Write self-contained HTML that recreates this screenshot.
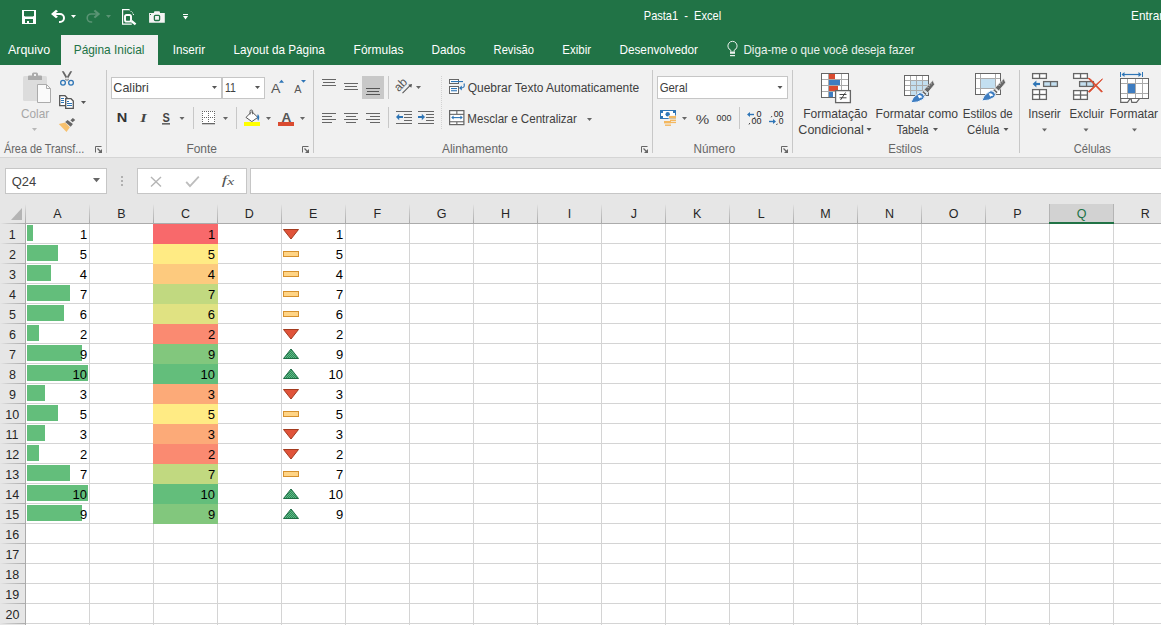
<!DOCTYPE html>
<html><head><meta charset="utf-8"><title>Pasta1 - Excel</title>
<style>
html,body{margin:0;padding:0;width:1161px;height:625px;overflow:hidden;background:#fff;font-family:"Liberation Sans",sans-serif}
svg{position:absolute;left:0;top:0;display:block}
text{white-space:pre}
</style></head><body>
<svg width="1161" height="625" viewBox="0 0 1161 625">
<defs>
<linearGradient id="vg" x1="0" y1="0" x2="0" y2="1"><stop offset="0" stop-color="#E6E6E6"/><stop offset="0.3" stop-color="#CDCDCD"/><stop offset="1" stop-color="#ABABAB"/></linearGradient>
<linearGradient id="hg" x1="0" y1="0" x2="1" y2="0"><stop offset="0" stop-color="#E6E6E6"/><stop offset="0.3" stop-color="#CDCDCD"/><stop offset="1" stop-color="#ABABAB"/></linearGradient>
<pattern id="gp" x="0" y="0" width="2" height="2" patternUnits="userSpaceOnUse"><rect width="2" height="2" fill="#2F8558"/><rect width="1" height="1" fill="#5DBE86"/><rect x="1" y="1" width="1" height="1" fill="#5DBE86"/></pattern>
<pattern id="dsep" x="0" y="0" width="1" height="2" patternUnits="userSpaceOnUse"><rect width="1" height="1" fill="#D2D2D2"/></pattern>
</defs>
<g id="title"><rect x="0" y="0" width="1161" height="65" fill="#217346"/><rect x="0" y="65" width="1161" height="92" fill="#F1F1F1"/><rect x="61" y="35" width="97" height="30" fill="#F1F1F1"/><rect x="0" y="157" width="1161" height="1" fill="#D5D5D5"/><rect x="0" y="158" width="1161" height="66" fill="#E6E6E6"/><rect x="22" y="10" width="14" height="14" fill="#FFFFFF"/><path d="M24 11h10v4.5l-1 1h-8l-1-1z" fill="#217346"/><rect x="25" y="19" width="8" height="4" fill="#217346"/><rect x="27" y="21" width="2" height="2" fill="#FFFFFF"/><path d="M54 14h6a4 4 0 0 1 0 8h-1" fill="none" stroke="#FFFFFF" stroke-width="2"/><path d="M51 14L56 9.8L58 11.2L54.6 14L58 16.8L56 18.2Z" fill="#FFFFFF"/><path d="M71 15h5l-2.5 3.00z" fill="#FFFFFF"/><path d="M97.2 14h-6a4 4 0 0 0 0 8h1" fill="none" stroke="#5A9474" stroke-width="1.6"/><path d="M100.2 14L95.2 9.8L93.6 11.0L96.8 14L93.6 17.0L95.2 18.2Z" fill="#5A9474"/><path d="M106 15h5l-2.5 3.00z" fill="#5A9474"/><path d="M129.2 9.6H122.6V24.2H131.8" fill="none" stroke="#FFFFFF" stroke-width="1.2"/><path d="M129.2 9.6L133.4 13.8V15.8" fill="none" stroke="#FFFFFF" stroke-width="1" stroke-dasharray="1.2 0.8"/><rect x="125" y="15" width="6" height="6.6" rx="1.6" fill="none" stroke="#FFFFFF" stroke-width="1.9"/><path d="M131.4 21L135.6 24.4" fill="none" stroke="#FFFFFF" stroke-width="2.3"/><path d="M149.1 12.9H153.8L154.4 11.2H159.5L160.1 12.9H164.8V22.8H149.1Z" fill="#F4F4F4"/><rect x="154.4" y="15.3" width="5.2" height="5.2" rx="1" fill="none" stroke="#217346" stroke-width="1.3"/><rect x="150" y="14" width="1" height="1" fill="#217346"/><rect x="183" y="14" width="5" height="1" fill="#FFFFFF"/><path d="M183 16h5l-2.5 3.5z" fill="#FFFFFF"/><text transform="matrix(0.9216 0 0 1.0 643.79 20)" font-family="Liberation Sans" font-size="12" fill="#FFFFFF">Pasta1  -  Excel</text><text transform="matrix(0.9843 0 0 1.0 1131.03 20)" font-family="Liberation Sans" font-size="12" fill="#FFFFFF">Entrar</text><text transform="matrix(1.0383 0 0 1.0 7.98 54)" font-family="Liberation Sans" font-size="12" fill="#FFFFFF">Arquivo</text><text transform="matrix(0.9915 0 0 1.0 73.72 54)" font-family="Liberation Sans" font-size="12" fill="#217346">Página Inicial</text><text transform="matrix(0.9709 0 0 1.0 172.72 54)" font-family="Liberation Sans" font-size="12" fill="#FFFFFF">Inserir</text><text transform="matrix(0.9770 0 0 1.0 233.54 54)" font-family="Liberation Sans" font-size="12" fill="#FFFFFF">Layout da Página</text><text transform="matrix(0.9981 0 0 1.0 353.62 54)" font-family="Liberation Sans" font-size="12" fill="#FFFFFF">Fórmulas</text><text transform="matrix(0.9799 0 0 1.0 431.44 54)" font-family="Liberation Sans" font-size="12" fill="#FFFFFF">Dados</text><text transform="matrix(0.9316 0 0 1.0 493.58 54)" font-family="Liberation Sans" font-size="12" fill="#FFFFFF">Revisão</text><text transform="matrix(0.9576 0 0 1.0 562.36 54)" font-family="Liberation Sans" font-size="12" fill="#FFFFFF">Exibir</text><text transform="matrix(0.9827 0 0 1.0 619.43 54)" font-family="Liberation Sans" font-size="12" fill="#FFFFFF">Desenvolvedor</text><text transform="matrix(0.9742 0 0 1.0 743.44 54)" font-family="Liberation Sans" font-size="12" fill="#EAF1ED">Diga-me o que você deseja fazer</text><path d="M730.8 51.5v-1.3a4.6 4.6 0 1 1 3.4 0v1.3" fill="none" stroke="#EAF1ED" stroke-width="1"/><rect x="730" y="51.5" width="5" height="2.3" fill="#EAF1ED"/><rect x="730" y="55" width="5" height="1.2" fill="#EAF1ED"/></g>
<g id="ribbon"><rect x="106" y="70" width="1" height="83" fill="#C8C8C8"/><rect x="313" y="70" width="1" height="83" fill="#C8C8C8"/><rect x="652" y="70" width="1" height="83" fill="#C8C8C8"/><rect x="792" y="70" width="1" height="83" fill="#C8C8C8"/><rect x="1019" y="70" width="1" height="83" fill="#C8C8C8"/><rect x="23" y="76" width="24" height="25" fill="#DCDCDC" rx="1.5"/><path d="M28 80v-3.5q0-1 1-1h3v-1.5q0-1.5 1.5-1.5h3q1.5 0 1.5 1.5v1.5h3q1 0 1 1v3.5z" fill="#ABABAB"/><rect x="34" y="74" width="2" height="2" fill="#F1F1F1"/><path d="M37.5 84.5h9l4 4v14h-13z" fill="#FAFAFA" stroke="#ABABAB" stroke-width="1"/><path d="M46.5 84.5v4h4" fill="none" stroke="#ABABAB" stroke-width="1"/><text transform="matrix(0.9832 0 0 1.0 21.00 118)" font-family="Liberation Sans" font-size="12" fill="#A6A6A6">Colar</text><path d="M32 128h5l-2.5 3.00z" fill="#B8B8B8"/><path d="M61.8 71.2L63.8 71.2L68.8 79.8L67.2 80.8ZM72.2 71.2L70.2 71.2L65.2 79.8L66.8 80.8Z" fill="#666"/><circle cx="63" cy="82.8" r="2.35" fill="none" stroke="#2E75B6" stroke-width="1.3"/><circle cx="71" cy="82.8" r="2.35" fill="none" stroke="#2E75B6" stroke-width="1.3"/><path d="M59.7 95.7h5.3l2 2v8h-7.3z" fill="#fff" stroke="#555" stroke-width="1.3"/><path d="M65.7 98.7h5.3l2.3 2.3v7.3h-7.6z" fill="#fff" stroke="#555" stroke-width="1.3"/><rect x="61" y="98" width="3" height="1" fill="#2E75B6"/><rect x="61" y="100" width="3" height="1" fill="#2E75B6"/><rect x="61" y="102" width="3" height="1" fill="#2E75B6"/><rect x="67" y="101" width="2" height="1" fill="#2E75B6"/><rect x="67" y="103" width="5" height="1" fill="#2E75B6"/><rect x="67" y="105" width="5" height="1" fill="#2E75B6"/><path d="M81 101h5l-2.5 3.00z" fill="#555"/><path d="M58.8 124.1L65.2 122.5L69.9 127.3L66.5 132.1Z" fill="#F7C16E"/><path d="M65.2 121.9L67.5 120L72.9 124.1L70.7 126.7Z" fill="#666"/><path d="M70.4 120.3L72.9 118L75.2 120L72.6 122.2Z" fill="#666"/><text transform="matrix(0.9065 0 0 1.0 3.98 153)" font-family="Liberation Sans" font-size="12" fill="#666666">Área de Transf...</text><path d="M95.5 152.5v-6h6" fill="none" stroke="#666" stroke-width="1"/><path d="M97.5 148.5l3.5 3.5" fill="none" stroke="#666" stroke-width="1.3"/><path d="M98 153h4v-4z" fill="#666"/><path d="M302.5 152.5v-6h6" fill="none" stroke="#666" stroke-width="1"/><path d="M304.5 148.5l3.5 3.5" fill="none" stroke="#666" stroke-width="1.3"/><path d="M305 153h4v-4z" fill="#666"/><path d="M641.5 152.5v-6h6" fill="none" stroke="#666" stroke-width="1"/><path d="M643.5 148.5l3.5 3.5" fill="none" stroke="#666" stroke-width="1.3"/><path d="M644 153h4v-4z" fill="#666"/><path d="M781.5 152.5v-6h6" fill="none" stroke="#666" stroke-width="1"/><path d="M783.5 148.5l3.5 3.5" fill="none" stroke="#666" stroke-width="1.3"/><path d="M784 153h4v-4z" fill="#666"/><rect x="111.5" y="77.5" width="110" height="21" fill="#fff" stroke="#C6C6C6"/><rect x="222.5" y="77.5" width="42" height="21" fill="#fff" stroke="#C6C6C6"/><text transform="matrix(1.0015 0 0 1.0 113.36 92)" font-family="Liberation Sans" font-size="12.5" fill="#404040">Calibri</text><text transform="matrix(0.8427 0 0 1.0 224.90 92)" font-family="Liberation Sans" font-size="12.5" fill="#404040">11</text><path d="M212 86h5l-2.5 3.00z" fill="#555"/><path d="M255 86h5l-2.5 3.00z" fill="#555"/><text transform="matrix(1.0579 0 0 1.0 270.97 92.6)" font-family="Liberation Sans" font-size="13.4" fill="#555">A</text><path d="M279 82.8l2.5-3 2.5 3z" fill="#2E75B6"/><text transform="matrix(1.0244 0 0 1.0 294.18 92.6)" font-family="Liberation Sans" font-size="10.6" fill="#555">A</text><path d="M301 80h5l-2.5 2.8z" fill="#2E75B6"/><text transform="matrix(1.1991 0 0 1.0 116.72 121.8)" font-family="Liberation Sans" font-size="12.2" fill="#333" font-weight="bold">N</text><text transform="matrix(1.2319 0 0 1.0 140.36 121.8)" font-family="Liberation Serif" font-size="13.3" fill="#444" font-style="italic" font-weight="bold">I</text><text transform="matrix(0.9030 0 0 1.0 162.38 121.8)" font-family="Liberation Sans" font-size="12.2" fill="#444" font-weight="bold">S</text><rect x="162" y="123.2" width="8" height="1.3" fill="#444"/><path d="M179.5 117h5l-2.5 3.00z" fill="#666"/><rect x="193" y="107" width="1" height="22" fill="#C8C8C8"/><rect x="202" y="111" width="13" height="13" fill="#fff"/><rect x="202" y="111" width="1" height="1" fill="#666"/><rect x="204" y="111" width="1" height="1" fill="#666"/><rect x="206" y="111" width="1" height="1" fill="#666"/><rect x="208" y="111" width="1" height="1" fill="#666"/><rect x="210" y="111" width="1" height="1" fill="#666"/><rect x="212" y="111" width="1" height="1" fill="#666"/><rect x="214" y="111" width="1" height="1" fill="#666"/><rect x="202" y="117" width="1" height="1" fill="#666"/><rect x="204" y="117" width="1" height="1" fill="#666"/><rect x="206" y="117" width="1" height="1" fill="#666"/><rect x="208" y="117" width="1" height="1" fill="#666"/><rect x="210" y="117" width="1" height="1" fill="#666"/><rect x="212" y="117" width="1" height="1" fill="#666"/><rect x="214" y="117" width="1" height="1" fill="#666"/><rect x="202" y="111" width="1" height="1" fill="#666"/><rect x="202" y="113" width="1" height="1" fill="#666"/><rect x="202" y="115" width="1" height="1" fill="#666"/><rect x="202" y="117" width="1" height="1" fill="#666"/><rect x="202" y="119" width="1" height="1" fill="#666"/><rect x="202" y="121" width="1" height="1" fill="#666"/><rect x="208" y="111" width="1" height="1" fill="#666"/><rect x="208" y="113" width="1" height="1" fill="#666"/><rect x="208" y="115" width="1" height="1" fill="#666"/><rect x="208" y="117" width="1" height="1" fill="#666"/><rect x="208" y="119" width="1" height="1" fill="#666"/><rect x="208" y="121" width="1" height="1" fill="#666"/><rect x="214" y="111" width="1" height="1" fill="#666"/><rect x="214" y="113" width="1" height="1" fill="#666"/><rect x="214" y="115" width="1" height="1" fill="#666"/><rect x="214" y="117" width="1" height="1" fill="#666"/><rect x="214" y="119" width="1" height="1" fill="#666"/><rect x="214" y="121" width="1" height="1" fill="#666"/><rect x="202" y="123" width="13" height="1.3" fill="#666"/><path d="M223 117h5l-2.5 3.00z" fill="#666"/><rect x="236" y="107" width="1" height="22" fill="#C8C8C8"/><path d="M246 117.4L251.8 111.6L257.8 117.4L251.8 121.6Z" fill="#fff" stroke="#555" stroke-width="1"/><path d="M250 114.5v-3.2q0-1.3 1.3-1.3t1.3 1.3v3" fill="none" stroke="#555" stroke-width="0.9"/><path d="M257.8 114q2.7 2.5 0.3 7q-1-2-1-4z" fill="#2E75B6"/><rect x="244" y="122" width="16" height="4" fill="#FFFF00"/><path d="M266 117h5l-2.5 3.00z" fill="#666"/><text transform="matrix(1.0434 0 0 1.0 281.56 121.6)" font-family="Liberation Sans" font-size="13" fill="#555" font-weight="bold">A</text><rect x="278" y="122" width="16" height="4" fill="#DA4B30"/><path d="M300 117h5l-2.5 3.00z" fill="#666"/><text transform="matrix(0.9977 0 0 1.0 186.42 153)" font-family="Liberation Sans" font-size="12" fill="#666666">Fonte</text><rect x="322.0" y="79" width="14" height="1" fill="#666"/><rect x="323.0" y="82" width="12" height="1" fill="#666"/><rect x="322.0" y="85" width="14" height="1" fill="#666"/><rect x="344.0" y="83" width="14" height="1" fill="#666"/><rect x="345.0" y="86" width="12" height="1" fill="#666"/><rect x="344.0" y="89" width="14" height="1" fill="#666"/><rect x="362" y="76" width="22" height="23" fill="#C8C8C8"/><rect x="366.0" y="88" width="14" height="1" fill="#555"/><rect x="367.0" y="91" width="12" height="1" fill="#555"/><rect x="366.0" y="94" width="14" height="1" fill="#555"/><rect x="388" y="76" width="1" height="23" fill="#C8C8C8"/><text transform="translate(400.8 85) rotate(-45)" text-anchor="middle" font-family="Liberation Sans" font-size="12" fill="#555"><tspan y="3.6">ab</tspan></text><path d="M402.5 93.2L410.5 85.2" fill="none" stroke="#555" stroke-width="1.1"/><path d="M412 84l-3.8 0.7 3.1 3.1z" fill="#555"/><path d="M416 86h5l-2.5 3.00z" fill="#666"/><rect x="441" y="75" width="1" height="55" fill="url(#dsep)"/><rect x="322" y="113" width="14" height="1" fill="#666"/><rect x="322" y="116" width="10" height="1" fill="#666"/><rect x="322" y="119" width="14" height="1" fill="#666"/><rect x="322" y="122" width="10" height="1" fill="#666"/><rect x="344.0" y="113" width="14" height="1" fill="#666"/><rect x="346.0" y="116" width="10" height="1" fill="#666"/><rect x="344.0" y="119" width="14" height="1" fill="#666"/><rect x="346.0" y="122" width="10" height="1" fill="#666"/><rect x="366" y="113" width="14" height="1" fill="#666"/><rect x="370" y="116" width="10" height="1" fill="#666"/><rect x="366" y="119" width="14" height="1" fill="#666"/><rect x="370" y="122" width="10" height="1" fill="#666"/><rect x="388" y="107" width="1" height="21" fill="#C8C8C8"/><rect x="396" y="111" width="16" height="1" fill="#666"/><rect x="396" y="123" width="16" height="1" fill="#666"/><rect x="404" y="114" width="8" height="1" fill="#666"/><rect x="404" y="117" width="8" height="1" fill="#666"/><rect x="404" y="120" width="8" height="1" fill="#666"/><rect x="418" y="111" width="16" height="1" fill="#666"/><rect x="418" y="123" width="16" height="1" fill="#666"/><rect x="426" y="114" width="8" height="1" fill="#666"/><rect x="426" y="117" width="8" height="1" fill="#666"/><rect x="426" y="120" width="8" height="1" fill="#666"/><path d="M399 117h4" fill="none" stroke="#2E75B6" stroke-width="2"/><path d="M396 117l3.2-3.2v6.4z" fill="#2E75B6"/><path d="M418 117h4" fill="none" stroke="#2E75B6" stroke-width="2"/><path d="M425 117l-3.2-3.2v6.4z" fill="#2E75B6"/><rect x="449.5" y="79.5" width="9" height="4" fill="#fff" stroke="#666"/><rect x="451" y="81" width="12" height="1.1" fill="#2E75B6"/><rect x="449.5" y="86.5" width="9" height="7" fill="#fff" stroke="#666"/><rect x="451" y="88" width="6" height="1.1" fill="#2E75B6"/><rect x="451" y="90.2" width="6" height="1.1" fill="#2E75B6"/><path d="M464 83.5Q465.5 87.8 461 88" fill="none" stroke="#2E75B6" stroke-width="1.2"/><path d="M459 88l2.8-2.4v4.8z" fill="#2E75B6"/><text transform="matrix(0.9984 0 0 1.0 467.73 92)" font-family="Liberation Sans" font-size="12" fill="#404040">Quebrar Texto Automaticamente</text><rect x="449.6" y="110.6" width="14.3" height="14" fill="#fff" stroke="#666" stroke-width="1.2"/><rect x="450" y="113.8" width="14" height="1.1" fill="#666"/><rect x="450" y="121.2" width="14" height="1.1" fill="#666"/><rect x="456.3" y="111" width="1.1" height="3" fill="#666"/><rect x="456.3" y="122" width="1.1" height="2.5" fill="#666"/><path d="M452.5 117.6h9" fill="none" stroke="#2E75B6" stroke-width="1.1"/><path d="M451.2 117.6l2.4-2v4zM462.8 117.6l-2.4-2v4z" fill="#2E75B6"/><text transform="matrix(0.9672 0 0 1.0 467.35 123)" font-family="Liberation Sans" font-size="12" fill="#404040">Mesclar e Centralizar</text><path d="M587 118h5l-2.5 3.00z" fill="#666"/><text transform="matrix(0.9897 0 0 1.0 441.98 152.5)" font-family="Liberation Sans" font-size="12" fill="#666666">Alinhamento</text><rect x="657.5" y="76.5" width="130" height="22" fill="#fff" stroke="#C6C6C6"/><text transform="matrix(0.9140 0 0 1.0 659.63 92)" font-family="Liberation Sans" font-size="12.5" fill="#404040">Geral</text><path d="M777.5 86h5l-2.5 3.00z" fill="#555"/><rect x="660" y="110" width="16" height="9" fill="#2E75B6"/><path d="M663 111H673V113H675V116H673V118H663V116H661V113H663Z" fill="#fff"/><circle cx="667.7" cy="114.3" r="2.2" fill="#2E75B6"/><rect x="668.5" y="115.5" width="8" height="3.2" fill="#F1F1F1"/><rect x="669" y="116" width="7" height="2.4" fill="#F4B860"/><rect x="670" y="119.6" width="6" height="1.4" fill="#F4B860"/><rect x="671" y="121.8" width="5" height="1.3" fill="#F4B860"/><rect x="664" y="121" width="7" height="2.4" fill="#F4B860"/><rect x="665" y="124.5" width="6" height="1.4" fill="#F4B860"/><path d="M682 117h5l-2.5 3.00z" fill="#666"/><text transform="matrix(1.1231 0 0 1.0 695.86 124)" font-family="Liberation Sans" font-size="13.5" fill="#444">%</text><text transform="matrix(0.9175 0 0 1.0 716.55 120.9)" font-family="Liberation Sans" font-size="9.8" fill="#333">000</text><rect x="739" y="107" width="1" height="22" fill="#C8C8C8"/><text transform="matrix(1.0709 0 0 1.0 756.55 116.8)" font-family="Liberation Sans" font-size="8.4" fill="#262626">0</text><text transform="matrix(1.0706 0 0 1.0 751.55 124)" font-family="Liberation Sans" font-size="8.4" fill="#262626">00</text><path d="M755 117.2l-0.8 1.2M749.8 123l-0.8 1.5" fill="none" stroke="#333" stroke-width="0.9"/><path d="M748.5 114.5h5.5" fill="none" stroke="#2E75B6" stroke-width="1.4"/><path d="M747 114.5l3-2.4v4.8z" fill="#2E75B6"/><text transform="matrix(1.0475 0 0 1.0 773.66 116.8)" font-family="Liberation Sans" font-size="8.4" fill="#262626">00</text><text transform="matrix(1.0211 0 0 1.0 778.66 124)" font-family="Liberation Sans" font-size="8.4" fill="#262626">0</text><path d="M772 116l-0.8 1.3M777.3 123.7l-0.8 1.3" fill="none" stroke="#333" stroke-width="0.9"/><path d="M769 121.5h5.5" fill="none" stroke="#2E75B6" stroke-width="1.4"/><path d="M776 121.5l-3-2.4v4.8z" fill="#2E75B6"/><text transform="matrix(0.9784 0 0 1.0 693.44 153)" font-family="Liberation Sans" font-size="12" fill="#666666">Número</text><rect x="821" y="73" width="28" height="25" fill="#fff"/><rect x="828" y="73" width="1" height="25" fill="#AAAAAA"/><rect x="841" y="73" width="1" height="25" fill="#AAAAAA"/><rect x="821" y="79" width="28" height="1" fill="#AAAAAA"/><rect x="821" y="85" width="28" height="1" fill="#AAAAAA"/><rect x="821" y="91" width="28" height="1" fill="#AAAAAA"/><rect x="821.5" y="73.5" width="27" height="24" fill="none" stroke="#666"/><rect x="829" y="74" width="6" height="5" fill="#DA4B30"/><rect x="829" y="80" width="11" height="5" fill="#3E7DC1"/><rect x="829" y="86" width="9" height="5" fill="#DA4B30"/><rect x="829" y="92" width="4" height="5" fill="#3E7DC1"/><rect x="835.6" y="90.6" width="14.8" height="12" fill="#fff" stroke="#666" stroke-width="1.3"/><path d="M839.5 94.5h7M839.5 97.8h7M845.5 92.5l-5 7.5" fill="none" stroke="#333" stroke-width="0.9"/><text transform="matrix(1.0042 0 0 1.0 803.21 118)" font-family="Liberation Sans" font-size="12" fill="#404040">Formatação</text><text transform="matrix(1.0425 0 0 1.0 798.36 134)" font-family="Liberation Sans" font-size="12" fill="#404040">Condicional</text><path d="M866.5 128h5l-2.5 3.00z" fill="#555"/><rect x="904" y="75" width="25" height="21" fill="#fff"/><rect x="910" y="75" width="1" height="21" fill="#AAAAAA"/><rect x="916" y="75" width="1" height="21" fill="#AAAAAA"/><rect x="922" y="75" width="1" height="21" fill="#AAAAAA"/><rect x="904" y="80" width="25" height="1" fill="#AAAAAA"/><rect x="904" y="85" width="25" height="1" fill="#AAAAAA"/><rect x="904" y="90" width="25" height="1" fill="#AAAAAA"/><rect x="904.5" y="75.5" width="24" height="20" fill="none" stroke="#666"/><rect x="911" y="81" width="5" height="4" fill="#C3DFF0"/><rect x="911" y="86" width="5" height="4" fill="#C3DFF0"/><rect x="911" y="91" width="5" height="4" fill="#C3DFF0"/><rect x="917" y="81" width="5" height="4" fill="#C3DFF0"/><rect x="917" y="86" width="5" height="4" fill="#C3DFF0"/><rect x="917" y="91" width="5" height="4" fill="#C3DFF0"/><rect x="923" y="81" width="5" height="4" fill="#C3DFF0"/><rect x="923" y="86" width="5" height="4" fill="#C3DFF0"/><rect x="923" y="91" width="5" height="4" fill="#C3DFF0"/><g transform="translate(0 0)"><path d="M933 80.3L934.6 84.6L927.8 92.8L924 89.6Z" fill="#666" stroke="#F1F1F1" stroke-width="0.8"/><rect x="929.2" y="85.2" width="0.9" height="0.9" fill="#ddd"/><rect x="930.8" y="83.4" width="0.9" height="0.9" fill="#ddd"/><rect x="927.6" y="87" width="0.9" height="0.9" fill="#ddd"/><path d="M923.2 90.6L927 93.8L925.6 95.4L921.8 92.2Z" fill="#666" stroke="#F1F1F1" stroke-width="0.8"/><path d="M910.8 102.8Q912.3 97 917.3 94.2A3.8 3.8 0 0 1 923.4 99.2Q918.5 102.8 910.8 102.8Z" fill="#3E7DC1" stroke="#fff" stroke-width="0.9"/><path d="M917.6 95.4Q921.4 94.2 922.4 97.8Q920.6 97.1 919.3 98.6Z" fill="#fff"/></g><text transform="matrix(1.0142 0 0 1.0 875.60 118)" font-family="Liberation Sans" font-size="12" fill="#404040">Formatar como</text><text transform="matrix(0.9006 0 0 1.0 896.66 134)" font-family="Liberation Sans" font-size="12" fill="#404040">Tabela</text><path d="M933 128h5l-2.5 3.00z" fill="#555"/><rect x="975" y="73" width="26" height="22" fill="#fff"/><rect x="980" y="73" width="1" height="22" fill="#AAAAAA"/><rect x="995" y="73" width="1" height="22" fill="#AAAAAA"/><rect x="975" y="78" width="26" height="1" fill="#AAAAAA"/><rect x="975" y="88" width="26" height="1" fill="#AAAAAA"/><rect x="975.5" y="73.5" width="25" height="21" fill="none" stroke="#666"/><rect x="981" y="79" width="14" height="9" fill="#C3DFF0"/><g transform="translate(71 -1.9)"><path d="M933 80.3L934.6 84.6L927.8 92.8L924 89.6Z" fill="#666" stroke="#F1F1F1" stroke-width="0.8"/><rect x="929.2" y="85.2" width="0.9" height="0.9" fill="#ddd"/><rect x="930.8" y="83.4" width="0.9" height="0.9" fill="#ddd"/><rect x="927.6" y="87" width="0.9" height="0.9" fill="#ddd"/><path d="M923.2 90.6L927 93.8L925.6 95.4L921.8 92.2Z" fill="#666" stroke="#F1F1F1" stroke-width="0.8"/><path d="M910.8 102.8Q912.3 97 917.3 94.2A3.8 3.8 0 0 1 923.4 99.2Q918.5 102.8 910.8 102.8Z" fill="#3E7DC1" stroke="#fff" stroke-width="0.9"/><path d="M917.6 95.4Q921.4 94.2 922.4 97.8Q920.6 97.1 919.3 98.6Z" fill="#fff"/></g><text transform="matrix(0.9622 0 0 1.0 962.75 118)" font-family="Liberation Sans" font-size="12" fill="#404040">Estilos de</text><text transform="matrix(0.9518 0 0 1.0 967.12 134)" font-family="Liberation Sans" font-size="12" fill="#404040">Célula</text><path d="M1003.5 128h5l-2.5 3.00z" fill="#555"/><text transform="matrix(0.9550 0 0 1.0 888.26 152.5)" font-family="Liberation Sans" font-size="12" fill="#666666">Estilos</text><rect x="1032.6" y="73.6" width="13.8" height="4.8" fill="#fff" stroke="#666" stroke-width="1.3"/><rect x="1038.9" y="73" width="1.3" height="6" fill="#666"/><rect x="1043.6" y="81.6" width="13.8" height="4.8" fill="#C3DFF0" stroke="#666" stroke-width="1.3"/><rect x="1049.9" y="81" width="1.3" height="6" fill="#666"/><path d="M1035.5 84h4.5" fill="none" stroke="#2E75B6" stroke-width="2.2"/><path d="M1032.6 84l3.8-3.4v6.8z" fill="#2E75B6"/><rect x="1032.6" y="89.6" width="13.8" height="9.8" fill="#fff" stroke="#666" stroke-width="1.3"/><rect x="1038.9" y="89" width="1.3" height="11" fill="#666"/><rect x="1032" y="93.9" width="15" height="1.3" fill="#666"/><text transform="matrix(0.9740 0 0 1.0 1028.32 117.5)" font-family="Liberation Sans" font-size="12" fill="#404040">Inserir</text><path d="M1042 128.5h5l-2.5 3.00z" fill="#666"/><rect x="1073.6" y="73.6" width="13.8" height="4.8" fill="#fff" stroke="#666" stroke-width="1.3"/><rect x="1079.9" y="73" width="1.3" height="6" fill="#666"/><rect x="1079.6" y="81.6" width="13.8" height="4.8" fill="#C3DFF0" stroke="#666" stroke-width="1.3"/><rect x="1085.9" y="81" width="1.3" height="6" fill="#666"/><rect x="1073.6" y="90.6" width="13.8" height="8.8" fill="#fff" stroke="#666" stroke-width="1.3"/><rect x="1079.9" y="90" width="1.3" height="10" fill="#666"/><rect x="1073" y="94.4" width="15" height="1.3" fill="#666"/><path d="M1088 78.2L1090 78.6L1102.4 91.4L1101.6 92.2ZM1102.4 78.8L1101.8 80L1089.6 92.2L1088.2 91.6Z" fill="#DA4B30" stroke="#DA4B30" stroke-width="0.8"/><text transform="matrix(0.9592 0 0 1.0 1069.56 117.5)" font-family="Liberation Sans" font-size="12" fill="#404040">Excluir</text><path d="M1083.5 128.5h5l-2.5 3.00z" fill="#666"/><rect x="1120" y="72" width="1" height="5" fill="#2E75B6"/><rect x="1142" y="72" width="1" height="5" fill="#2E75B6"/><path d="M1122 74.5h19" fill="none" stroke="#2E75B6" stroke-width="1.2"/><path d="M1121.5 74.5l3-2.5v5zM1141.5 74.5l-3-2.5v5z" fill="#2E75B6"/><rect x="1120" y="78" width="29" height="21" fill="#fff"/><rect x="1127" y="78" width="1" height="21" fill="#AAAAAA"/><rect x="1135" y="78" width="1" height="21" fill="#AAAAAA"/><rect x="1142" y="78" width="1" height="21" fill="#AAAAAA"/><rect x="1120" y="83" width="29" height="1" fill="#AAAAAA"/><rect x="1120" y="93" width="29" height="1" fill="#AAAAAA"/><rect x="1120.5" y="78.5" width="28" height="20" fill="none" stroke="#666"/><rect x="1128" y="84" width="7" height="9" fill="#3E7DC1"/><path d="M1120.7 98.5V102.3H1127.5L1129.8 99.2H1131.2L1131.8 102.3H1136.5L1139.5 98.5Z" fill="#fff" stroke="#666" stroke-width="1.2"/><text transform="matrix(1.0002 0 0 1.0 1109.42 117.5)" font-family="Liberation Sans" font-size="12" fill="#404040">Formatar</text><path d="M1132 128.5h5l-2.5 3.00z" fill="#666"/><text transform="matrix(0.9262 0 0 1.0 1073.74 153)" font-family="Liberation Sans" font-size="12" fill="#666666">Células</text></g>
<g id="formula"><rect x="5.5" y="168.5" width="101" height="25" fill="#fff" stroke="#C6C6C6"/><text transform="matrix(1.0367 0 0 1.0 11.69 186)" font-family="Liberation Sans" font-size="12.5" fill="#404040">Q24</text><path d="M93 178h7l-3.5 4.20z" fill="#666"/><rect x="121" y="176" width="2" height="2" fill="#B0B0B0"/><rect x="121" y="180" width="2" height="2" fill="#B0B0B0"/><rect x="121" y="184" width="2" height="2" fill="#B0B0B0"/><rect x="137.5" y="168.5" width="109" height="25" fill="#fff" stroke="#C6C6C6"/><path d="M151 177l10 9.5M161 177l-10 9.5" fill="none" stroke="#B5B5B5" stroke-width="1.4"/><path d="M186.2 181.8l3.8 4.4 8.8-9.6" fill="none" stroke="#BDBDBD" stroke-width="1.8"/><text transform="matrix(1.5109 0 0 1.0 221.78 184.2)" font-family="Liberation Serif" font-size="13" fill="#555" font-style="italic">f</text><text transform="matrix(1.4857 0 0 1.0 227.19 185.2)" font-family="Liberation Serif" font-size="10.5" fill="#555" font-style="italic">x</text><rect x="250.5" y="168.5" width="915" height="25" fill="#fff" stroke="#C6C6C6"/></g>
<g id="grid"><rect x="26" y="224" width="1135" height="401" fill="#fff"/><rect x="0" y="224" width="25" height="401" fill="#E6E6E6"/><rect x="89" y="204" width="1" height="19" fill="url(#vg)"/><rect x="153" y="204" width="1" height="19" fill="url(#vg)"/><rect x="217" y="204" width="1" height="19" fill="url(#vg)"/><rect x="281" y="204" width="1" height="19" fill="url(#vg)"/><rect x="345" y="204" width="1" height="19" fill="url(#vg)"/><rect x="409" y="204" width="1" height="19" fill="url(#vg)"/><rect x="473" y="204" width="1" height="19" fill="url(#vg)"/><rect x="537" y="204" width="1" height="19" fill="url(#vg)"/><rect x="601" y="204" width="1" height="19" fill="url(#vg)"/><rect x="665" y="204" width="1" height="19" fill="url(#vg)"/><rect x="729" y="204" width="1" height="19" fill="url(#vg)"/><rect x="793" y="204" width="1" height="19" fill="url(#vg)"/><rect x="857" y="204" width="1" height="19" fill="url(#vg)"/><rect x="921" y="204" width="1" height="19" fill="url(#vg)"/><rect x="985" y="204" width="1" height="19" fill="url(#vg)"/><rect x="1049" y="204" width="1" height="19" fill="url(#vg)"/><rect x="1113" y="204" width="1" height="19" fill="url(#vg)"/><rect x="25" y="204" width="1" height="19" fill="url(#vg)"/><rect x="1050" y="204" width="63" height="18" fill="#D2D2D2"/><rect x="1049" y="204" width="1" height="18" fill="#B4B4B4"/><rect x="1113" y="204" width="1" height="18" fill="#B4B4B4"/><rect x="1049" y="222" width="65" height="2" fill="#217346"/><rect x="0" y="223" width="25" height="1" fill="url(#hg)"/><rect x="25" y="223" width="1024" height="1" fill="#ABABAB"/><rect x="1114" y="223" width="47" height="1" fill="#ABABAB"/><rect x="25" y="224" width="1" height="401" fill="#ABABAB"/><path d="M11 220L22 208V220z" fill="#B4B4B4"/><rect x="89" y="224" width="1" height="401" fill="#D4D4D4"/><rect x="153" y="224" width="1" height="401" fill="#D4D4D4"/><rect x="217" y="224" width="1" height="401" fill="#D4D4D4"/><rect x="281" y="224" width="1" height="401" fill="#D4D4D4"/><rect x="345" y="224" width="1" height="401" fill="#D4D4D4"/><rect x="409" y="224" width="1" height="401" fill="#D4D4D4"/><rect x="473" y="224" width="1" height="401" fill="#D4D4D4"/><rect x="537" y="224" width="1" height="401" fill="#D4D4D4"/><rect x="601" y="224" width="1" height="401" fill="#D4D4D4"/><rect x="665" y="224" width="1" height="401" fill="#D4D4D4"/><rect x="729" y="224" width="1" height="401" fill="#D4D4D4"/><rect x="793" y="224" width="1" height="401" fill="#D4D4D4"/><rect x="857" y="224" width="1" height="401" fill="#D4D4D4"/><rect x="921" y="224" width="1" height="401" fill="#D4D4D4"/><rect x="985" y="224" width="1" height="401" fill="#D4D4D4"/><rect x="1049" y="224" width="1" height="401" fill="#D4D4D4"/><rect x="1113" y="224" width="1" height="401" fill="#D4D4D4"/><rect x="26" y="243" width="1135" height="1" fill="#D4D4D4"/><rect x="0" y="243" width="25" height="1" fill="url(#hg)"/><rect x="26" y="263" width="1135" height="1" fill="#D4D4D4"/><rect x="0" y="263" width="25" height="1" fill="url(#hg)"/><rect x="26" y="283" width="1135" height="1" fill="#D4D4D4"/><rect x="0" y="283" width="25" height="1" fill="url(#hg)"/><rect x="26" y="303" width="1135" height="1" fill="#D4D4D4"/><rect x="0" y="303" width="25" height="1" fill="url(#hg)"/><rect x="26" y="323" width="1135" height="1" fill="#D4D4D4"/><rect x="0" y="323" width="25" height="1" fill="url(#hg)"/><rect x="26" y="343" width="1135" height="1" fill="#D4D4D4"/><rect x="0" y="343" width="25" height="1" fill="url(#hg)"/><rect x="26" y="363" width="1135" height="1" fill="#D4D4D4"/><rect x="0" y="363" width="25" height="1" fill="url(#hg)"/><rect x="26" y="383" width="1135" height="1" fill="#D4D4D4"/><rect x="0" y="383" width="25" height="1" fill="url(#hg)"/><rect x="26" y="403" width="1135" height="1" fill="#D4D4D4"/><rect x="0" y="403" width="25" height="1" fill="url(#hg)"/><rect x="26" y="423" width="1135" height="1" fill="#D4D4D4"/><rect x="0" y="423" width="25" height="1" fill="url(#hg)"/><rect x="26" y="443" width="1135" height="1" fill="#D4D4D4"/><rect x="0" y="443" width="25" height="1" fill="url(#hg)"/><rect x="26" y="463" width="1135" height="1" fill="#D4D4D4"/><rect x="0" y="463" width="25" height="1" fill="url(#hg)"/><rect x="26" y="483" width="1135" height="1" fill="#D4D4D4"/><rect x="0" y="483" width="25" height="1" fill="url(#hg)"/><rect x="26" y="503" width="1135" height="1" fill="#D4D4D4"/><rect x="0" y="503" width="25" height="1" fill="url(#hg)"/><rect x="26" y="523" width="1135" height="1" fill="#D4D4D4"/><rect x="0" y="523" width="25" height="1" fill="url(#hg)"/><rect x="26" y="543" width="1135" height="1" fill="#D4D4D4"/><rect x="0" y="543" width="25" height="1" fill="url(#hg)"/><rect x="26" y="563" width="1135" height="1" fill="#D4D4D4"/><rect x="0" y="563" width="25" height="1" fill="url(#hg)"/><rect x="26" y="583" width="1135" height="1" fill="#D4D4D4"/><rect x="0" y="583" width="25" height="1" fill="url(#hg)"/><rect x="26" y="603" width="1135" height="1" fill="#D4D4D4"/><rect x="0" y="603" width="25" height="1" fill="url(#hg)"/><rect x="26" y="623" width="1135" height="1" fill="#D4D4D4"/><rect x="0" y="623" width="25" height="1" fill="url(#hg)"/><text transform="matrix(1.0000 0 0 1.0 53.33 218)" font-family="Liberation Sans" font-size="12.5" fill="#262626">A</text><text transform="matrix(1.0000 0 0 1.0 117.15 218)" font-family="Liberation Sans" font-size="12.5" fill="#262626">B</text><text transform="matrix(1.0000 0 0 1.0 180.91 218)" font-family="Liberation Sans" font-size="12.5" fill="#262626">C</text><text transform="matrix(1.0000 0 0 1.0 244.77 218)" font-family="Liberation Sans" font-size="12.5" fill="#262626">D</text><text transform="matrix(1.0000 0 0 1.0 309.09 218)" font-family="Liberation Sans" font-size="12.5" fill="#262626">E</text><text transform="matrix(1.0000 0 0 1.0 373.42 218)" font-family="Liberation Sans" font-size="12.5" fill="#262626">F</text><text transform="matrix(1.0000 0 0 1.0 436.79 218)" font-family="Liberation Sans" font-size="12.5" fill="#262626">G</text><text transform="matrix(1.0000 0 0 1.0 500.98 218)" font-family="Liberation Sans" font-size="12.5" fill="#262626">H</text><text transform="matrix(1.0000 0 0 1.0 567.76 218)" font-family="Liberation Sans" font-size="12.5" fill="#262626">I</text><text transform="matrix(1.0000 0 0 1.0 630.74 218)" font-family="Liberation Sans" font-size="12.5" fill="#262626">J</text><text transform="matrix(1.0000 0 0 1.0 692.89 218)" font-family="Liberation Sans" font-size="12.5" fill="#262626">K</text><text transform="matrix(1.0000 0 0 1.0 757.72 218)" font-family="Liberation Sans" font-size="12.5" fill="#262626">L</text><text transform="matrix(1.0000 0 0 1.0 820.29 218)" font-family="Liberation Sans" font-size="12.5" fill="#262626">M</text><text transform="matrix(1.0000 0 0 1.0 884.98 218)" font-family="Liberation Sans" font-size="12.5" fill="#262626">N</text><text transform="matrix(1.0000 0 0 1.0 948.64 218)" font-family="Liberation Sans" font-size="12.5" fill="#262626">O</text><text transform="matrix(1.0000 0 0 1.0 1013.15 218)" font-family="Liberation Sans" font-size="12.5" fill="#262626">P</text><text transform="matrix(1.0000 0 0 1.0 1076.64 218)" font-family="Liberation Sans" font-size="12.5" fill="#217346">Q</text><text transform="matrix(1.0000 0 0 1.0 1140.76 218)" font-family="Liberation Sans" font-size="12.5" fill="#262626">R</text><text transform="matrix(1.0000 0 0 1.0 8.85 239)" font-family="Liberation Sans" font-size="12.5" fill="#262626">1</text><text transform="matrix(1.0000 0 0 1.0 9.02 259)" font-family="Liberation Sans" font-size="12.5" fill="#262626">2</text><text transform="matrix(1.0000 0 0 1.0 9.06 279)" font-family="Liberation Sans" font-size="12.5" fill="#262626">3</text><text transform="matrix(1.0000 0 0 1.0 9.06 299)" font-family="Liberation Sans" font-size="12.5" fill="#262626">4</text><text transform="matrix(1.0000 0 0 1.0 9.04 319)" font-family="Liberation Sans" font-size="12.5" fill="#262626">5</text><text transform="matrix(1.0000 0 0 1.0 8.98 339)" font-family="Liberation Sans" font-size="12.5" fill="#262626">6</text><text transform="matrix(1.0000 0 0 1.0 9.02 359)" font-family="Liberation Sans" font-size="12.5" fill="#262626">7</text><text transform="matrix(1.0000 0 0 1.0 9.02 379)" font-family="Liberation Sans" font-size="12.5" fill="#262626">8</text><text transform="matrix(1.0000 0 0 1.0 9.03 399)" font-family="Liberation Sans" font-size="12.5" fill="#262626">9</text><text transform="matrix(1.0000 0 0 1.0 5.32 419)" font-family="Liberation Sans" font-size="12.5" fill="#262626">10</text><text transform="matrix(1.0000 0 0 1.0 5.38 439)" font-family="Liberation Sans" font-size="12.5" fill="#262626">11</text><text transform="matrix(1.0000 0 0 1.0 5.39 459)" font-family="Liberation Sans" font-size="12.5" fill="#262626">12</text><text transform="matrix(1.0000 0 0 1.0 5.35 479)" font-family="Liberation Sans" font-size="12.5" fill="#262626">13</text><text transform="matrix(1.0000 0 0 1.0 5.26 499)" font-family="Liberation Sans" font-size="12.5" fill="#262626">14</text><text transform="matrix(1.0000 0 0 1.0 5.33 519)" font-family="Liberation Sans" font-size="12.5" fill="#262626">15</text><text transform="matrix(1.0000 0 0 1.0 5.35 539)" font-family="Liberation Sans" font-size="12.5" fill="#262626">16</text><text transform="matrix(1.0000 0 0 1.0 5.39 559)" font-family="Liberation Sans" font-size="12.5" fill="#262626">17</text><text transform="matrix(1.0000 0 0 1.0 5.34 579)" font-family="Liberation Sans" font-size="12.5" fill="#262626">18</text><text transform="matrix(1.0000 0 0 1.0 5.37 599)" font-family="Liberation Sans" font-size="12.5" fill="#262626">19</text><text transform="matrix(1.0000 0 0 1.0 5.48 619)" font-family="Liberation Sans" font-size="12.5" fill="#262626">20</text><rect x="27" y="225" width="6" height="16" fill="#63BE7B"/><rect x="153" y="224" width="65" height="20" fill="#F8696B"/><path d="M283.5 229.5h15l-7.5 9.5z" fill="#E0533A" stroke="#A33A1E" stroke-width="1"/><text transform="matrix(1.0000 0 0 1.0 79.90 239)" font-family="Liberation Sans" font-size="13" fill="#000">1</text><text transform="matrix(1.0000 0 0 1.0 207.90 239)" font-family="Liberation Sans" font-size="13" fill="#000">1</text><text transform="matrix(1.0000 0 0 1.0 335.90 239)" font-family="Liberation Sans" font-size="13" fill="#000">1</text><rect x="27" y="245" width="31" height="16" fill="#63BE7B"/><rect x="153" y="244" width="65" height="20" fill="#FFEB84"/><rect x="283.5" y="251.5" width="15" height="5" fill="#FFD485" stroke="#D4902E"/><text transform="matrix(1.0000 0 0 1.0 79.82 259)" font-family="Liberation Sans" font-size="13" fill="#000">5</text><text transform="matrix(1.0000 0 0 1.0 207.82 259)" font-family="Liberation Sans" font-size="13" fill="#000">5</text><text transform="matrix(1.0000 0 0 1.0 335.82 259)" font-family="Liberation Sans" font-size="13" fill="#000">5</text><rect x="27" y="265" width="24" height="16" fill="#63BE7B"/><rect x="153" y="264" width="65" height="20" fill="#FDCA7E"/><rect x="283.5" y="271.5" width="15" height="5" fill="#FFD485" stroke="#D4902E"/><text transform="matrix(1.0000 0 0 1.0 79.65 279)" font-family="Liberation Sans" font-size="13" fill="#000">4</text><text transform="matrix(1.0000 0 0 1.0 207.65 279)" font-family="Liberation Sans" font-size="13" fill="#000">4</text><text transform="matrix(1.0000 0 0 1.0 335.65 279)" font-family="Liberation Sans" font-size="13" fill="#000">4</text><rect x="27" y="285" width="43" height="16" fill="#63BE7B"/><rect x="153" y="284" width="65" height="20" fill="#C1D980"/><rect x="283.5" y="291.5" width="15" height="5" fill="#FFD485" stroke="#D4902E"/><text transform="matrix(1.0000 0 0 1.0 79.92 299)" font-family="Liberation Sans" font-size="13" fill="#000">7</text><text transform="matrix(1.0000 0 0 1.0 207.92 299)" font-family="Liberation Sans" font-size="13" fill="#000">7</text><text transform="matrix(1.0000 0 0 1.0 335.92 299)" font-family="Liberation Sans" font-size="13" fill="#000">7</text><rect x="27" y="305" width="37" height="16" fill="#63BE7B"/><rect x="153" y="304" width="65" height="20" fill="#E0E282"/><rect x="283.5" y="311.5" width="15" height="5" fill="#FFD485" stroke="#D4902E"/><text transform="matrix(1.0000 0 0 1.0 79.84 319)" font-family="Liberation Sans" font-size="13" fill="#000">6</text><text transform="matrix(1.0000 0 0 1.0 207.84 319)" font-family="Liberation Sans" font-size="13" fill="#000">6</text><text transform="matrix(1.0000 0 0 1.0 335.84 319)" font-family="Liberation Sans" font-size="13" fill="#000">6</text><rect x="27" y="325" width="12" height="16" fill="#63BE7B"/><rect x="153" y="324" width="65" height="20" fill="#FA8A71"/><path d="M283.5 329.5h15l-7.5 9.5z" fill="#E0533A" stroke="#A33A1E" stroke-width="1"/><text transform="matrix(1.0000 0 0 1.0 79.92 339)" font-family="Liberation Sans" font-size="13" fill="#000">2</text><text transform="matrix(1.0000 0 0 1.0 207.92 339)" font-family="Liberation Sans" font-size="13" fill="#000">2</text><text transform="matrix(1.0000 0 0 1.0 335.92 339)" font-family="Liberation Sans" font-size="13" fill="#000">2</text><rect x="27" y="345" width="55" height="16" fill="#63BE7B"/><rect x="153" y="344" width="65" height="20" fill="#82C77D"/><path d="M283.5 358.5h15l-7.5-9.5z" fill="url(#gp)" stroke="#1E6E45" stroke-width="1"/><text transform="matrix(1.0000 0 0 1.0 79.89 359)" font-family="Liberation Sans" font-size="13" fill="#000">9</text><text transform="matrix(1.0000 0 0 1.0 207.89 359)" font-family="Liberation Sans" font-size="13" fill="#000">9</text><text transform="matrix(1.0000 0 0 1.0 335.89 359)" font-family="Liberation Sans" font-size="13" fill="#000">9</text><rect x="27" y="365" width="61" height="16" fill="#63BE7B"/><rect x="153" y="364" width="65" height="20" fill="#63BE7B"/><path d="M283.5 378.5h15l-7.5-9.5z" fill="url(#gp)" stroke="#1E6E45" stroke-width="1"/><text transform="matrix(1.0000 0 0 1.0 72.55 379)" font-family="Liberation Sans" font-size="13" fill="#000">10</text><text transform="matrix(1.0000 0 0 1.0 200.55 379)" font-family="Liberation Sans" font-size="13" fill="#000">10</text><text transform="matrix(1.0000 0 0 1.0 328.55 379)" font-family="Liberation Sans" font-size="13" fill="#000">10</text><rect x="27" y="385" width="18" height="16" fill="#63BE7B"/><rect x="153" y="384" width="65" height="20" fill="#FCAA78"/><path d="M283.5 389.5h15l-7.5 9.5z" fill="#E0533A" stroke="#A33A1E" stroke-width="1"/><text transform="matrix(1.0000 0 0 1.0 79.84 399)" font-family="Liberation Sans" font-size="13" fill="#000">3</text><text transform="matrix(1.0000 0 0 1.0 207.84 399)" font-family="Liberation Sans" font-size="13" fill="#000">3</text><text transform="matrix(1.0000 0 0 1.0 335.84 399)" font-family="Liberation Sans" font-size="13" fill="#000">3</text><rect x="27" y="405" width="31" height="16" fill="#63BE7B"/><rect x="153" y="404" width="65" height="20" fill="#FFEB84"/><rect x="283.5" y="411.5" width="15" height="5" fill="#FFD485" stroke="#D4902E"/><text transform="matrix(1.0000 0 0 1.0 79.82 419)" font-family="Liberation Sans" font-size="13" fill="#000">5</text><text transform="matrix(1.0000 0 0 1.0 207.82 419)" font-family="Liberation Sans" font-size="13" fill="#000">5</text><text transform="matrix(1.0000 0 0 1.0 335.82 419)" font-family="Liberation Sans" font-size="13" fill="#000">5</text><rect x="27" y="425" width="18" height="16" fill="#63BE7B"/><rect x="153" y="424" width="65" height="20" fill="#FCAA78"/><path d="M283.5 429.5h15l-7.5 9.5z" fill="#E0533A" stroke="#A33A1E" stroke-width="1"/><text transform="matrix(1.0000 0 0 1.0 79.84 439)" font-family="Liberation Sans" font-size="13" fill="#000">3</text><text transform="matrix(1.0000 0 0 1.0 207.84 439)" font-family="Liberation Sans" font-size="13" fill="#000">3</text><text transform="matrix(1.0000 0 0 1.0 335.84 439)" font-family="Liberation Sans" font-size="13" fill="#000">3</text><rect x="27" y="445" width="12" height="16" fill="#63BE7B"/><rect x="153" y="444" width="65" height="20" fill="#FA8A71"/><path d="M283.5 449.5h15l-7.5 9.5z" fill="#E0533A" stroke="#A33A1E" stroke-width="1"/><text transform="matrix(1.0000 0 0 1.0 79.92 459)" font-family="Liberation Sans" font-size="13" fill="#000">2</text><text transform="matrix(1.0000 0 0 1.0 207.92 459)" font-family="Liberation Sans" font-size="13" fill="#000">2</text><text transform="matrix(1.0000 0 0 1.0 335.92 459)" font-family="Liberation Sans" font-size="13" fill="#000">2</text><rect x="27" y="465" width="43" height="16" fill="#63BE7B"/><rect x="153" y="464" width="65" height="20" fill="#C1D980"/><rect x="283.5" y="471.5" width="15" height="5" fill="#FFD485" stroke="#D4902E"/><text transform="matrix(1.0000 0 0 1.0 79.92 479)" font-family="Liberation Sans" font-size="13" fill="#000">7</text><text transform="matrix(1.0000 0 0 1.0 207.92 479)" font-family="Liberation Sans" font-size="13" fill="#000">7</text><text transform="matrix(1.0000 0 0 1.0 335.92 479)" font-family="Liberation Sans" font-size="13" fill="#000">7</text><rect x="27" y="485" width="61" height="16" fill="#63BE7B"/><rect x="153" y="484" width="65" height="20" fill="#63BE7B"/><path d="M283.5 498.5h15l-7.5-9.5z" fill="url(#gp)" stroke="#1E6E45" stroke-width="1"/><text transform="matrix(1.0000 0 0 1.0 72.55 499)" font-family="Liberation Sans" font-size="13" fill="#000">10</text><text transform="matrix(1.0000 0 0 1.0 200.55 499)" font-family="Liberation Sans" font-size="13" fill="#000">10</text><text transform="matrix(1.0000 0 0 1.0 328.55 499)" font-family="Liberation Sans" font-size="13" fill="#000">10</text><rect x="27" y="505" width="55" height="16" fill="#63BE7B"/><rect x="153" y="504" width="65" height="20" fill="#82C77D"/><path d="M283.5 518.5h15l-7.5-9.5z" fill="url(#gp)" stroke="#1E6E45" stroke-width="1"/><text transform="matrix(1.0000 0 0 1.0 79.89 519)" font-family="Liberation Sans" font-size="13" fill="#000">9</text><text transform="matrix(1.0000 0 0 1.0 207.89 519)" font-family="Liberation Sans" font-size="13" fill="#000">9</text><text transform="matrix(1.0000 0 0 1.0 335.89 519)" font-family="Liberation Sans" font-size="13" fill="#000">9</text></g>
</svg>
</body></html>
